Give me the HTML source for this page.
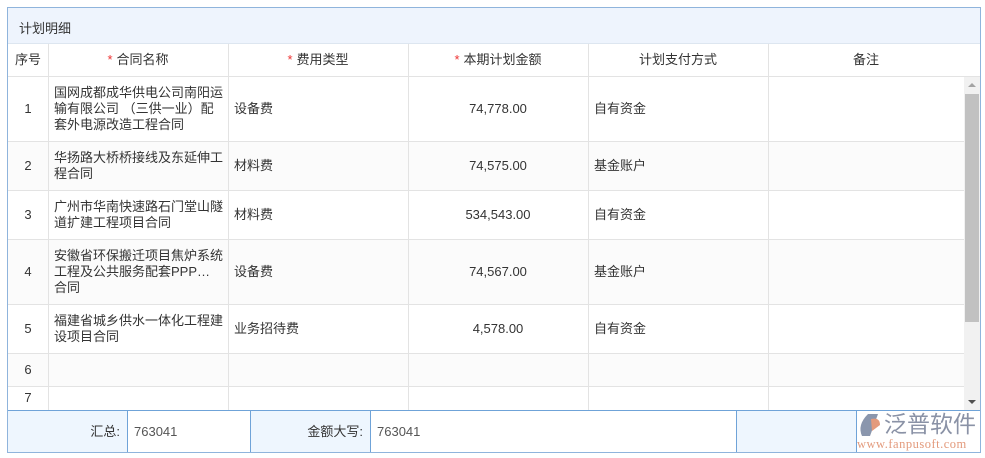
<!DOCTYPE html><html><head><meta charset="utf-8"><style>
*{margin:0;padding:0;box-sizing:border-box}
body{width:985px;height:458px;background:#fff;font-family:"Liberation Sans","Noto Sans CJK SC",sans-serif;font-size:13px;color:#333;position:relative;overflow:hidden}
.a{position:absolute}
.box{left:7px;top:7px;width:974px;height:446px;border:1px solid #8fb4dc}
.title{left:8px;top:8px;width:972px;height:36px;background:#eef4fd;border-bottom:1px solid #dde6f0;padding:10px 0 0 11px;font-size:13px}
.v{position:absolute;width:1px;background:#e3e3e3}
.h{position:absolute;height:1px;background:#e3e3e3;left:8px;width:956px}
.c{position:absolute;display:flex;align-items:center;line-height:16px}
.star{color:#e33;margin-right:4px}
.fv{position:absolute;width:1px;background:#6fa3d8;top:411px;height:41px}
</style></head><body>
<div class="a box"></div>
<div class="a title">计划明细</div>
<div class="a" style="left:8px;top:141px;width:956px;height:49px;background:#fbfbfb"></div>
<div class="a" style="left:8px;top:239px;width:956px;height:65px;background:#fbfbfb"></div>
<div class="a" style="left:8px;top:353px;width:956px;height:33px;background:#fbfbfb"></div>
<div class="h" style="top:76px;width:972px"></div>
<div class="h" style="top:141px"></div><div class="h" style="top:190px"></div><div class="h" style="top:239px"></div><div class="h" style="top:304px"></div><div class="h" style="top:353px"></div><div class="h" style="top:386px"></div>
<div class="v" style="left:48px;top:44px;height:366px"></div>
<div class="v" style="left:228px;top:44px;height:366px"></div>
<div class="v" style="left:408px;top:44px;height:366px"></div>
<div class="v" style="left:588px;top:44px;height:366px"></div>
<div class="v" style="left:768px;top:44px;height:366px"></div>
<div class="c" style="left:8px;top:44px;width:40px;height:32px;justify-content:center">序号</div>
<div class="c" style="left:48px;top:44px;width:180px;height:32px;justify-content:center"><span class="star">*</span>合同名称</div>
<div class="c" style="left:228px;top:44px;width:180px;height:32px;justify-content:center"><span class="star">*</span>费用类型</div>
<div class="c" style="left:408px;top:44px;width:180px;height:32px;justify-content:center"><span class="star">*</span>本期计划金额</div>
<div class="c" style="left:588px;top:44px;width:180px;height:32px;justify-content:center">计划支付方式</div>
<div class="c" style="left:768px;top:44px;width:196px;height:32px;justify-content:center">备注</div>
<div class="a" style="left:964px;top:77px;width:16px;height:333px;background:#f1f1f1"></div>
<div class="a" style="left:965px;top:94px;width:14px;height:228px;background:#c1c1c1"></div>
<div class="a" style="left:968px;top:83px;border-left:4px solid transparent;border-right:4px solid transparent;border-bottom:4px solid #a3a3a3"></div>
<div class="a" style="left:968px;top:400px;border-left:4px solid transparent;border-right:4px solid transparent;border-top:4px solid #505050"></div>

<div class="c" style="left:8px;top:76px;width:40px;height:65px;justify-content:center">1</div>
<div class="c" style="left:54px;top:76px;width:171px;height:65px">国网成都成华供电公司南阳运输有限公司 （三供一业）配套外电源改造工程合同</div>
<div class="c" style="left:234px;top:76px;height:65px">设备费</div>
<div class="c" style="left:408px;top:76px;width:180px;height:65px;justify-content:center">74,778.00</div>
<div class="c" style="left:594px;top:76px;height:65px">自有资金</div>

<div class="c" style="left:8px;top:141px;width:40px;height:49px;justify-content:center">2</div>
<div class="c" style="left:54px;top:141px;width:171px;height:49px">华扬路大桥桥接线及东延伸工程合同</div>
<div class="c" style="left:234px;top:141px;height:49px">材料费</div>
<div class="c" style="left:408px;top:141px;width:180px;height:49px;justify-content:center">74,575.00</div>
<div class="c" style="left:594px;top:141px;height:49px">基金账户</div>

<div class="c" style="left:8px;top:190px;width:40px;height:49px;justify-content:center">3</div>
<div class="c" style="left:54px;top:190px;width:171px;height:49px">广州市华南快速路石门堂山隧道扩建工程项目合同</div>
<div class="c" style="left:234px;top:190px;height:49px">材料费</div>
<div class="c" style="left:408px;top:190px;width:180px;height:49px;justify-content:center">534,543.00</div>
<div class="c" style="left:594px;top:190px;height:49px">自有资金</div>

<div class="c" style="left:8px;top:239px;width:40px;height:65px;justify-content:center">4</div>
<div class="c" style="left:54px;top:239px;width:171px;height:65px">安徽省环保搬迁项目焦炉系统工程及公共服务配套PPP…<br>合同</div>
<div class="c" style="left:234px;top:239px;height:65px">设备费</div>
<div class="c" style="left:408px;top:239px;width:180px;height:65px;justify-content:center">74,567.00</div>
<div class="c" style="left:594px;top:239px;height:65px">基金账户</div>

<div class="c" style="left:8px;top:304px;width:40px;height:49px;justify-content:center">5</div>
<div class="c" style="left:54px;top:304px;width:171px;height:49px">福建省城乡供水一体化工程建设项目合同</div>
<div class="c" style="left:234px;top:304px;height:49px">业务招待费</div>
<div class="c" style="left:408px;top:304px;width:180px;height:49px;justify-content:center">4,578.00</div>
<div class="c" style="left:594px;top:304px;height:49px">自有资金</div>

<div class="c" style="left:8px;top:353px;width:40px;height:33px;justify-content:center">6</div>
<div class="c" style="left:8px;top:386px;width:40px;height:24px;justify-content:center">7</div>

<div class="a" style="left:8px;top:410px;width:972px;height:1px;background:#6fa3d8"></div>
<div class="a" style="left:8px;top:411px;width:119px;height:41px;background:#eef6fe"></div>
<div class="a" style="left:251px;top:411px;width:119px;height:41px;background:#eef6fe"></div>
<div class="a" style="left:737px;top:411px;width:119px;height:41px;background:#eef6fe"></div>
<div class="fv" style="left:127px"></div><div class="fv" style="left:250px"></div><div class="fv" style="left:370px"></div><div class="fv" style="left:736px"></div><div class="fv" style="left:856px"></div>
<div class="c" style="left:8px;top:411px;width:112px;height:41px;justify-content:flex-end">汇总:</div>
<div class="c" style="left:134px;top:411px;height:41px;color:#555">763041</div>
<div class="c" style="left:251px;top:411px;width:112px;height:41px;justify-content:flex-end">金额大写:</div>
<div class="c" style="left:377px;top:411px;height:41px;color:#555">763041</div>

<svg class="a" style="left:856px;top:412px" width="30" height="26" viewBox="0 0 30 26"><path d="M12 2 L22 2 L14 24 L6 24 Q1 13 12 2Z" fill="#8a96ad"/><path d="M15 7 Q24 5 24 13 L16 19Z" fill="#e39a7c"/></svg>
<div class="a" style="left:884px;top:410px;font-size:23px;color:#8a92a6;letter-spacing:0px;line-height:28px">泛普软件</div>
<div class="a" style="left:857px;top:437px;font-size:12.5px;color:#e39a7c;font-family:'Liberation Serif',serif;letter-spacing:.5px;line-height:14px">www.fanpusoft.com</div>
</body></html>
